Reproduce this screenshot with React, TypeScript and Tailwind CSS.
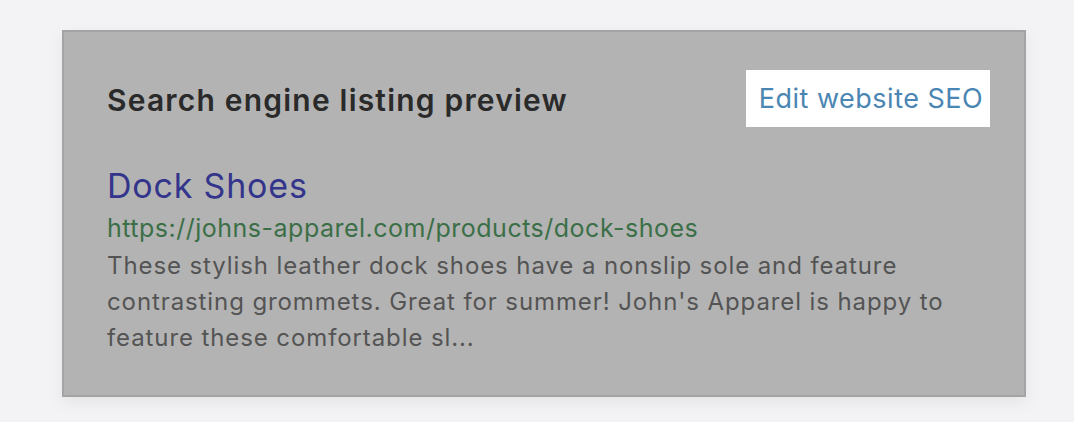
export default function App() {
  return (
    <div className="min-h-screen w-full bg-[#f3f3f5] pt-[30px] pl-[62px] font-['Inter',sans-serif]">
      <div className="w-[964px] h-[367px] border-2 border-[#a4a4a4] bg-[#b3b3b3] shadow-[0_6px_16px_rgba(0,0,0,0.06)]">
        <div className="flex items-start justify-between pl-[43px] pr-[34px] pt-[38px]">
          <h2 className="mt-[15px] text-[30px] font-semibold leading-none tracking-[1.2px] text-[#2a2a2a]">
            Search engine listing preview
          </h2>
          <a className="flex h-[57px] w-[244px] items-center justify-center bg-white pl-[6px] text-[27px] leading-none tracking-[0.5px] text-[#4a86b3]">
            Edit website SEO
          </a>
        </div>
        <div className="pl-[43px] pt-[42px]">
          <div className="text-[34px] leading-none tracking-[0.8px] text-[#33358c]">Dock Shoes</div>
          <div className="mt-[13px] text-[25px] leading-none tracking-[0.5px] text-[#3b6f47]">
            https://johns-apparel.com/products/dock-shoes
          </div>
          <p className="mt-[7px] w-[880px] text-[24px] leading-[36px] tracking-[0.9px] text-[#545454]">
            These stylish leather dock shoes have a nonslip sole and feature contrasting grommets. Great for summer! John's Apparel is happy to feature these comfortable sl...
          </p>
        </div>
      </div>
    </div>
  )
}
